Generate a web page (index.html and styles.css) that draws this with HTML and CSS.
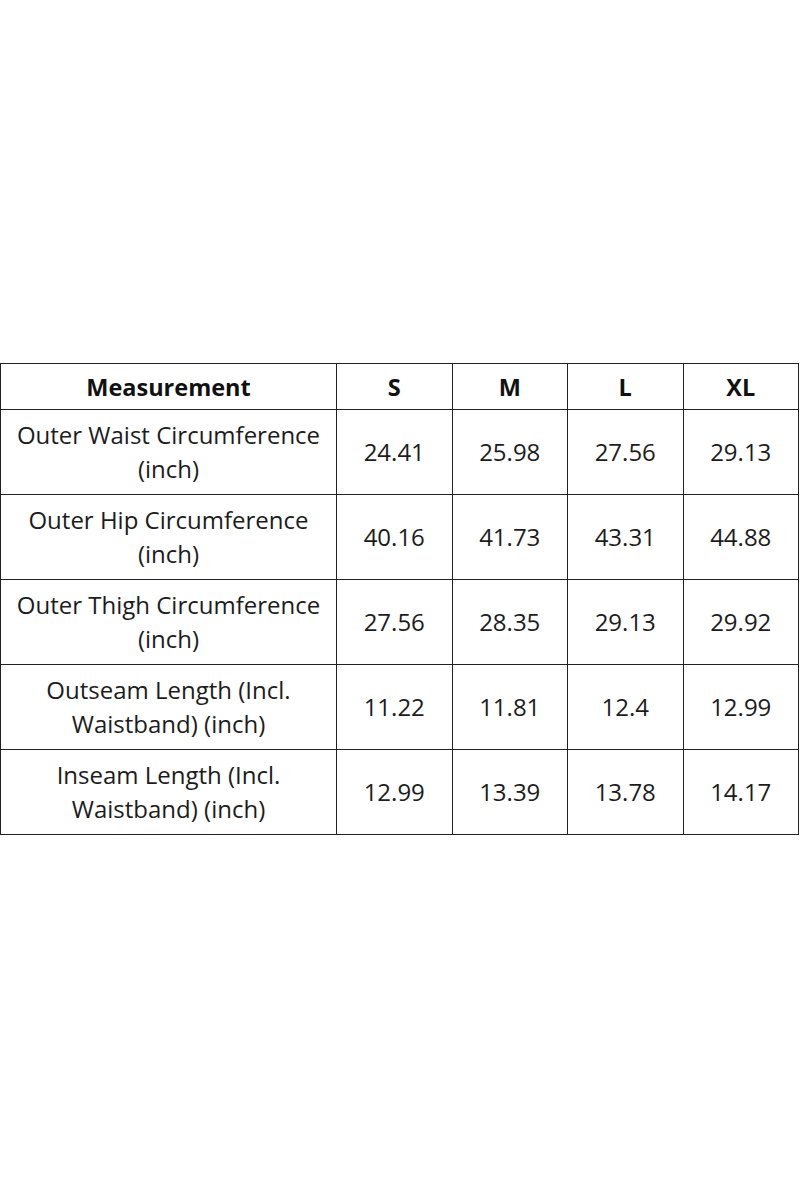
FILE: index.html
```html
<!DOCTYPE html>
<html>
<head>
<meta charset="utf-8">
<link rel="stylesheet" href="styles.css">
</head>
<body>
<div class="page">
<table class="size-table">
  <colgroup>
    <col class="c-first"><col class="c-size"><col class="c-size"><col class="c-size"><col class="c-size">
  </colgroup>
  <thead>
    <tr><th>Measurement</th><th>S</th><th>M</th><th>L</th><th>XL</th></tr>
  </thead>
  <tbody>
    <tr><td class="label">Outer Waist Circumference (inch)</td><td>24.41</td><td>25.98</td><td>27.56</td><td>29.13</td></tr>
    <tr><td class="label">Outer Hip Circumference (inch)</td><td>40.16</td><td>41.73</td><td>43.31</td><td>44.88</td></tr>
    <tr><td class="label">Outer Thigh Circumference (inch)</td><td>27.56</td><td>28.35</td><td>29.13</td><td>29.92</td></tr>
    <tr><td class="label">Outseam Length (Incl. Waistband) (inch)</td><td>11.22</td><td>11.81</td><td>12.4</td><td>12.99</td></tr>
    <tr><td class="label">Inseam Length (Incl. Waistband) (inch)</td><td>12.99</td><td>13.39</td><td>13.78</td><td>14.17</td></tr>
  </tbody>
</table>
</div>
</body>
</html>
```
FILE: styles.css
```css
html, body { margin: 0; padding: 0; background: #fff; }
.page { padding-top: 363px; width: 800px; }
.size-table {
  border-collapse: collapse;
  table-layout: fixed;
  width: 798px;
  font-family: "Open Sans", "Noto Sans", sans-serif;
  color: #1c1c1c;
}
.c-first { width: 336px; }
.c-size { width: 115.5px; }
.size-table th, .size-table td {
  border: 1.5px solid #222;
  text-align: center;
  vertical-align: middle;
  padding: 0 6px;
}
.size-table th {
  height: 45px;
  font-size: 23.5px;
  font-weight: 700;
  color: #111;
}
.size-table td {
  height: 84px;
  font-size: 24px;
  line-height: 34px;
}
```
